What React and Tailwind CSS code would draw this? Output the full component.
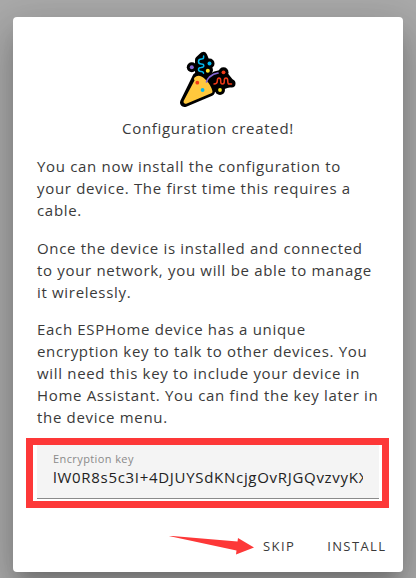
const PARAGRAPHS = [
  ["You can now install the configuration to", "your device. The first time this requires a", "cable."],
  ["Once the device is installed and connected", "to your network, you will be able to manage", "it wirelessly."],
  [
    "Each ESPHome device has a unique",
    "encryption key to talk to other devices. You",
    "will need this key to include your device in",
    "Home Assistant. You can find the key later in",
    "the device menu.",
  ],
];

function PartyPopper() {
  return (
    <svg width="60" height="60" viewBox="178 50 60 60" fill="none" strokeLinecap="round" strokeLinejoin="round">
      {/* black outline */}
      <g stroke="#000" fill="#000">
        <path d="M197 77 184.500 102.500 210.500 91.500Z" strokeWidth="9" />
        <path d="M203.300 56 199 60 199 72 205 77 209 70Z" strokeWidth="8" />
        <path d="M207 80 215 75 223 73 231 83 220 87 213 89Z" strokeWidth="7" />
        <path d="M222 83 231.500 83.500" strokeWidth="8" />
        <circle cx="191.800" cy="67.300" r="5" stroke="none" />
        <circle cx="209.500" cy="63.500" r="5" stroke="none" />
        <circle cx="223.500" cy="72.300" r="5" stroke="none" />
        <circle cx="220" cy="90" r="5" stroke="none" />
      </g>
      {/* cone */}
      <path d="M197 80 185.500 101.800 210.500 91.500Q209 86 204.500 81.500 199 76 196 79Z" fill="#ffc83d" stroke="#ffc83d" strokeWidth="4" />
      <circle cx="197.300" cy="82.700" r="1.900" fill="#f03a17" />
      <circle cx="202.600" cy="90" r="1.900" fill="#00b8ed" />
      {/* streamers */}
      <path d="M203.600 56v1.500q0 1.500-1.900 1.500-3.200 0-3.200 2.500t2.700 2.500q2.600 0 2.600 1.700T201 67.500q-2.500 0-2.500 2t2.500 2q2.500 0 2.500 1.800" stroke="#00b8ed" strokeWidth="1.500" />
      <path d="M206.500 82Q207 79.500 209.500 77 213.500 73.500 218 73" stroke="#8467d6" strokeWidth="1.700" />
      <path d="M214 84q3.300 0 3.300-3t1.700-3 1.700 2.500v1.200q0 2.300 1.800 2.300t1.800-2.500v-1q0-2.500 1.700-2.500t1.700 2.500.8 3.500h3" stroke="#f03a17" strokeWidth="1.500" />
      <circle cx="191.800" cy="67.300" r="2" fill="#8467d6" />
      <circle cx="209.500" cy="63.500" r="2" fill="#00b8ed" />
      <circle cx="207.800" cy="70.800" r="2" fill="#ffe629" />
      <circle cx="223.500" cy="72.300" r="1.900" fill="#f03a17" />
      <circle cx="220" cy="90" r="1.900" fill="#ffe629" />
    </svg>
  );
}

function EncryptionKeyField() {
  return (
    <div className="ml-[13px] w-[363px] h-[70px] border-[7px] border-[#fd3838] pl-1 pr-[3px]">
      <div className="h-[54px] bg-[#f4f4f4] border-b border-[#8a8a8a] px-4 pt-[7px]">
        <div className="text-[11px] leading-[14px] tracking-[0.4px] text-[#8a8a8a]">Encryption key</div>
        <div className="text-[15px] leading-[22px] tracking-[0.700px] text-[#222] whitespace-nowrap overflow-hidden">
          lW0R8s5c3I+4DJUYSdKNcjgOvRJGQvzvyKX
        </div>
      </div>
    </div>
  );
}

export default function App() {
  return (
    <div className="w-[416px] h-[578px] overflow-hidden bg-[#aaaaaa] pt-[17px] pl-[13px] font-['Open_Sans',sans-serif]">
      <div className="w-[390px] h-[555px] rounded bg-white flex flex-col shadow-[0_11px_15px_-7px_rgba(0,0,0,0.2),0_24px_38px_3px_rgba(0,0,0,0.14),0_9px_46px_8px_rgba(0,0,0,0.12)]">
        <div className="flex flex-col items-center pt-[33px]">
          <PartyPopper />
          <div className="mt-[7px] text-[15px] leading-[22px] tracking-[0.700px] text-[#3a3a3a]">Configuration created!</div>
        </div>
        <div className="mt-4 pl-6 flex flex-col gap-[15.500px] text-[15px] leading-[22px] tracking-[0.680px] text-[#3a3a3a]">
          {PARAGRAPHS.map((lines) => (
            <p key={lines[0]} className="whitespace-nowrap">
              {lines.map((line) => (
                <span key={line} className="block">{line}</span>
              ))}
            </p>
          ))}
        </div>
        <div className="mt-[10px]">
          <EncryptionKeyField />
        </div>
        <div className="mt-[23px] pl-[153px] flex items-center h-8 text-[13px] tracking-[1.400px] text-[#3a3a3a]">
          <svg width="88" height="22" viewBox="166 535 88 22" className="shrink-0">
            <path d="M166.500 534.500 237.500 540.500 238 537 254 546.500 236 553.500 236.500 549.500Z" fill="#fd3838" />
          </svg>
          <button className="ml-[9px]">SKIP</button>
          <button className="ml-8">INSTALL</button>
        </div>
      </div>
    </div>
  );
}
